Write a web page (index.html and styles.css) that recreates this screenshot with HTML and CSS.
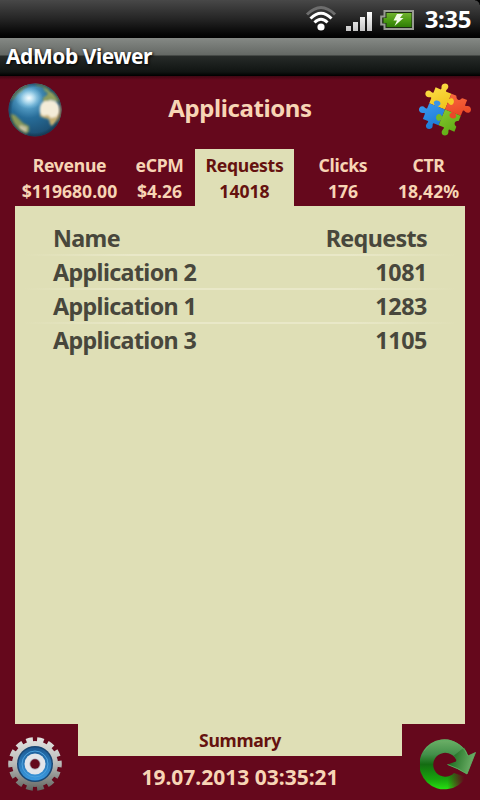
FILE: index.html
```html
<!DOCTYPE html>
<html lang="en">
<head>
  <meta charset="UTF-8" />
  <meta name="viewport" content="width=device-width, initial-scale=1.0"/>
  <title>AdMob Viewer</title>
  <link rel="stylesheet" href="styles.css">
</head>
<body>
  <div class="status-bar">
    <svg class="wifi" width="32" height="28" viewBox="0 0 32 28" fill="none">
      <path d="M2 9.5 Q16 -4.5 30 9.5" stroke="#6d6d6d" stroke-width="3"/>
      <path d="M5.5 13.5 Q16 3 26.5 13.5" stroke="#fff" stroke-width="3"/>
      <path d="M9.5 17.5 Q16 11 22.5 17.5" stroke="#fff" stroke-width="3"/>
      <circle cx="16" cy="22" r="3.6" fill="#fff"/>
    </svg>
    <svg class="signal" width="27" height="20" viewBox="0 0 27 20">
      <defs>
        <linearGradient id="bars" x1="0" y1="0" x2="0" y2="1">
          <stop offset="0" stop-color="#fff"/>
          <stop offset="1" stop-color="#c4c4c4"/>
        </linearGradient>
      </defs>
      <path d="M0 14h5v5H0zM7 10h5v9H7zM14 5h5v14h-5zM21 0h5v19h-5z" fill="url(#bars)"/>
    </svg>
    <svg class="battery" width="34" height="20" viewBox="0 0 34 20">
      <defs>
        <linearGradient id="charge" x1="0" y1="0" x2="0" y2="1">
          <stop offset="0" stop-color="#71b22f"/>
          <stop offset=".5" stop-color="#4c9b13"/>
          <stop offset="1" stop-color="#2f7d05"/>
        </linearGradient>
      </defs>
      <path d="M4.5 1h28.500v18H4.500v-4.500H1.200v-8H4.500z" fill="#1b2a12" stroke="#999b94" stroke-width="2"/>
      <path d="M6.500 3h25v14h-25v-4h-3v-5h3z" fill="url(#charge)"/>
      <path d="M17 4h6l-3 4h3.500L14.500 16l2.500-5.500h-3.500z" fill="#f4fbea"/>
    </svg>
    <span class="clock">3:35</span>
    <span class="corner"></span>
  </div>

  <div class="title-bar">AdMob Viewer</div>

  <div class="app">
    <div class="header">
      <svg class="icon" width="56" height="56" viewBox="0 0 56 56">
        <defs>
          <radialGradient id="sea" cx=".38" cy=".28" r=".75">
            <stop offset="0" stop-color="#b5e3f5"/>
            <stop offset=".2" stop-color="#5aa3cb"/>
            <stop offset=".5" stop-color="#276c98"/>
            <stop offset="1" stop-color="#1a4a6c"/>
          </radialGradient>
          <radialGradient id="shine">
            <stop offset="0" stop-color="#fff" stop-opacity=".9"/>
            <stop offset="1" stop-color="#9fdcf5" stop-opacity="0"/>
          </radialGradient>
          <radialGradient id="rim">
            <stop offset=".85" stop-color="#102433" stop-opacity="0"/>
            <stop offset="1" stop-color="#102433" stop-opacity=".5"/>
          </radialGradient>
          <clipPath id="disc"><circle cx="28" cy="28" r="26.500"/></clipPath>
          <filter id="soft"><feGaussianBlur stdDeviation=".8"/></filter>
        </defs>
        <circle cx="28" cy="28" r="26.500" fill="url(#sea)"/>
        <g clip-path="url(#disc)">
          <g filter="url(#soft)">
            <path d="M3 17Q8 5 19 2l3 2-6 3-1 3-5 2-2 4-5 3z" fill="#7d9a70"/>
            <path d="M28 1l8 1 7 5-1 4-4-1-2-5-6-1z" fill="#7b9a68"/>
            <path d="M36 16l4-3 1-4 5 1 6 6 1 5-4-2-5-1-4 1-4 1z" fill="#8f9d5d"/>
            <path d="M33 25q1-5 5-6l3 0 2-1 5 1 4 4 1 6-1 6-5 3-5 0-2-3-5 0q-3-4-2-10z" fill="#f4ecd8"/>
            <path d="M33 31l3 3 5-1 3 3 5-1 4-5-1 5q-3 6-7 9l-2-2-1-5-5-1-4-2z" fill="#c4ae72"/>
            <path d="M54 19l2 6-1 8-5 9 2-10z" fill="#b39564"/>
            <path d="M3 32l5 1 4 4 4 4 6 3v5l-3 4-7-4Q4 42 3 32z" fill="#88985a"/>
            <path d="M13 43l7 2-1 6-7-4z" fill="#c5c1a2"/>
          </g>
          <ellipse cx="22" cy="16" rx="14" ry="11" fill="url(#shine)"/>
          <circle cx="28" cy="28" r="26.500" fill="url(#rim)"/>
        </g>
      </svg>
      <h1>Applications</h1>
      <svg class="icon" width="56" height="56" viewBox="0 0 56 56">
        <defs>
          <linearGradient id="yellow" x1="0" y1="0" x2="1" y2="1"><stop offset="0" stop-color="#ffe552"/><stop offset="1" stop-color="#efc21a"/></linearGradient>
          <linearGradient id="red" x1="0" y1="0" x2="1" y2="1"><stop offset="0" stop-color="#f8693f"/><stop offset="1" stop-color="#e8401f"/></linearGradient>
          <linearGradient id="blue" x1="0" y1="0" x2="1" y2="1"><stop offset="0" stop-color="#3d9cf0"/><stop offset="1" stop-color="#1976d2"/></linearGradient>
          <linearGradient id="green" x1="0" y1="0" x2="1" y2="1"><stop offset="0" stop-color="#83c52c"/><stop offset="1" stop-color="#5aa812"/></linearGradient>
        </defs>
        <g transform="translate(28 27.500) rotate(22)">
          <path d="M-17-17h5.500c1.500-1-1.500-3 0-5.500s5-2.500 6 0-1.500 4.500 0 5.500H0V0h-17v-5.500c-1-1.500-3 1.500-5.500 0s-2.500-5 0-6 4.500 1.500 5.500 0z" fill="url(#yellow)"/>
          <path d="M0-17h5c1 0 1 3 3.500 3s2.500-3 3.500-3h5v5.500c1 1.500 3-1.500 5.500 0s2.500 5 0 6-4.500-1.500-5.500 0V0H0z" fill="url(#red)"/>
          <path d="M-17 0H0v17h-5.500c-1.500 1 1.500 3 0 5.500s-5 2.500-6 0 1.500-4.500 0-5.500H-17v-5.500c-1-1.500-3 1.500-5.500 0s-2.500-5 0-6 4.500 1.500 5.500 0z" fill="url(#blue)"/>
          <path d="M0 0h17v5c0 1-3 1-3 3.500s3 2.500 3 3.500v5h-5.500c-1.500 1 1.500 3 0 5.500s-5 2.500-6 0 1.500-4.500 0-5.500H0z" fill="url(#green)"/>
          <path d="M-.5-11c2-1 2.500-3 4.500-1.500s2 5 0 6-2.500-1-4.500-1z" fill="#f6cb27"/>
          <path d="M-11 .5c-1-2-3-2.500-1.500-4.500s5-2 6 0-1 2.500-1 4.500z" fill="#3d94e4"/>
          <path d="M11-.5c1 2 3 2.500 1.500 4.500s-5 2-6 0 1-2.500 1-4.500z" fill="#eb4a28"/>
          <path d="M.5 11c-2 1-2.500 3-4.500 1.500s-2-5 0-6 2.500 1 4.500 1z" fill="#74bb24"/>
        </g>
      </svg>
    </div>

    <div class="tabs">
      <div class="tab revenue"><span class="label">Revenue</span><span>$119680.00</span></div>
      <div class="tab ecpm"><span class="label">eCPM</span><span>$4.26</span></div>
      <div class="tab requests active"><span class="label">Requests</span><span>14018</span></div>
      <div class="tab clicks"><span class="label">Clicks</span><span>176</span></div>
      <div class="tab ctr"><span class="label">CTR</span><span>18,42%</span></div>
    </div>

    <div class="panel">
      <div class="row"><span>Name</span><span>Requests</span></div>
      <div class="row"><span>Application 2</span><span class="num">1081</span></div>
      <div class="row"><span>Application 1</span><span class="num">1283</span></div>
      <div class="row"><span>Application 3</span><span class="num">1105</span></div>
    </div>

    <div class="footer">
      <svg class="icon gear" width="56" height="56" viewBox="0 0 56 56">
        <defs>
          <linearGradient id="steel" x1="0" y1="0" x2="0" y2="1">
            <stop offset="0" stop-color="#e6e6e4"/>
            <stop offset=".5" stop-color="#b9bab8"/>
            <stop offset="1" stop-color="#5c5f5b"/>
          </linearGradient>
          <linearGradient id="ring" x1="0" y1="0" x2="0" y2="1">
            <stop offset="0" stop-color="#1c5a94"/>
            <stop offset="1" stop-color="#3b9ae0"/>
          </linearGradient>
          <mask id="teeth">
            <circle cx="28" cy="28" r="23" fill="#fff"/>
            <circle cx="28" cy="28" r="24.300" fill="none" stroke="#fff" stroke-width="5" pathLength="140" stroke-dasharray="6 4" stroke-dashoffset="-2" transform="rotate(-90 28 28)"/>
          </mask>
        </defs>
        <rect width="56" height="56" fill="url(#steel)" mask="url(#teeth)"/>
        <circle cx="28" cy="28" r="18" fill="#184775"/>
        <circle cx="28" cy="28" r="16.500" fill="url(#ring)"/>
        <circle cx="28" cy="28" r="13" fill="none" stroke="#4fa3de" stroke-width="1"/>
        <circle cx="28" cy="28" r="10.500" fill="#e3e5ea"/>
        <circle cx="28" cy="28" r="5.500" fill="#aaa3ad"/>
        <circle cx="28" cy="28" r="4.700" fill="#65081c"/>
      </svg>
      <div class="footer-center">
        <div class="summary">Summary</div>
        <div class="date">19.07.2013 03:35:21</div>
      </div>
      <svg class="icon refresh" width="58" height="54" viewBox="0 0 58 54">
        <defs>
          <linearGradient id="arrow" x1="0" y1="0" x2="0" y2="1">
            <stop offset="0" stop-color="#6db068"/>
            <stop offset=".3" stop-color="#43904a"/>
            <stop offset=".5" stop-color="#146c12"/>
            <stop offset=".8" stop-color="#18a50d"/>
            <stop offset="1" stop-color="#26e112"/>
          </linearGradient>
          <linearGradient id="tail" x1="0" y1="0" x2="1" y2="0">
            <stop offset=".1" stop-color="#65081c" stop-opacity="0"/>
            <stop offset=".8" stop-color="#65081c"/>
          </linearGradient>
          <linearGradient id="head" gradientUnits="userSpaceOnUse" x1="30" y1="22" x2="52" y2="28">
            <stop offset="0" stop-color="#1f6f22"/>
            <stop offset="1" stop-color="#6db068"/>
          </linearGradient>
        </defs>
        <path d="M48 17A25 25 0 1 0 46 38L34 34A12 12 0 1 1 36 20.500z" fill="url(#arrow)"/>
        <path d="M25 33h24v20H25z" fill="url(#tail)"/>
        <path d="M27.500 25.500L36 22.500q1-3-2-6l10-8q3 4 4 8.500l7.500-3.500L47 35q-9-5-19.500-9.500z" fill="url(#head)"/>
        <path d="M27.500 25.500Q38 29 47 35l8.500-21.500L48 17A25 25 0 0 0 4 12" fill="none" stroke="#5fae62" stroke-width=".9"/>
      </svg>
    </div>
  </div>
</body>
</html>
```
FILE: styles.css
```css
:root {
  --wine: #65081c;
  --cream: #dfdfb6;
  --peach: #f7d5b5;
  --text: #48473c;
}

* {
  box-sizing: border-box;
}

body {
  margin: 0;
  width: 480px;
  height: 800px;
  display: flex;
  flex-direction: column;
  background: var(--wine);
  font-family: "Noto Sans", "Open Sans", sans-serif;
  font-weight: bold;
  overflow: hidden;
}

.status-bar {
  position: relative;
  height: 38px;
  display: flex;
  align-items: flex-start;
  justify-content: flex-end;
  padding-right: 9px;
  background: linear-gradient(#484848, #252525 50%, #050505 90%, #000);
}

.wifi {
  margin: 5px 9px 0 0;
}

.signal {
  margin: 12px 7px 0 0;
}

.battery {
  margin: 10px 11px 0 0;
}

.clock {
  color: #fff;
  font-size: 24px;
  line-height: 38px;
  letter-spacing: -0.4px;
}

.corner {
  position: absolute;
  top: 0;
  right: 0;
  width: 5px;
  height: 5px;
  background: radial-gradient(circle at 0 100%, transparent 4px, #000 5px);
}

.title-bar {
  height: 38px;
  padding-left: 6px;
  color: #fff;
  font-size: 21px;
  line-height: 37px;
  letter-spacing: -0.45px;
  text-shadow: 1px 1px 3px #000;
  background: linear-gradient(#858985, #646864 17px, #272b29 18px, #101412 34px, #000);
}

.app {
  flex: 1;
  display: flex;
  flex-direction: column;
  padding: 0 15px;
  background: linear-gradient(#3f0713, var(--wine) 4px);
}

.header {
  height: 73px;
  margin: 0 -8px;
  display: flex;
  justify-content: space-between;
  align-items: center;
  padding-bottom: 6px;
}

h1 {
  margin: 0 0 3px;
  color: var(--peach);
  font-size: 24px;
  line-height: 32px;
  letter-spacing: -0.4px;
}

.tabs {
  display: flex;
  height: 57px;
}

.tab {
  display: flex;
  flex-direction: column;
  align-items: center;
  padding-top: 3px;
  color: var(--peach);
  font-size: 17.6px;
  line-height: 26px;
  white-space: nowrap;
}

.label {
  letter-spacing: -0.3px;
}

.revenue {
  width: 109px;
}

.ecpm {
  width: 71px;
}

.requests {
  width: 99px;
}

.clicks {
  width: 98px;
}

.ctr {
  width: 73px;
}

.tab.active {
  background: var(--cream);
  color: #65120f;
}

.panel {
  height: 518px;
  padding: 14px 8px 0;
  background: var(--cream);
}

.row {
  height: 34px;
  display: flex;
  justify-content: space-between;
  padding: 0 30px;
  color: var(--text);
  font-size: 23.3px;
  line-height: 36px;
  letter-spacing: -0.65px;
}

.num {
  letter-spacing: -0.4px;
}

.row + .row {
  background: linear-gradient(90deg, transparent, #e9e8c8 25%, #e9e8c8 75%, transparent) top / 100% 2px no-repeat;
}

.footer {
  flex: 1;
  display: flex;
  justify-content: space-between;
  margin: 0 -13px 0 -8px;
}

.gear {
  margin-top: 12px;
}

.refresh {
  margin-top: 15px;
}

.footer-center {
  width: 324px;
  margin-left: 15px;
  margin-right: auto;
  text-align: center;
}

.summary {
  height: 32px;
  background: var(--cream);
  color: #65120f;
  font-size: 17.6px;
  line-height: 32px;
  letter-spacing: -0.3px;
}

.date {
  color: var(--peach);
  font-size: 21px;
  line-height: 42px;
}
```
